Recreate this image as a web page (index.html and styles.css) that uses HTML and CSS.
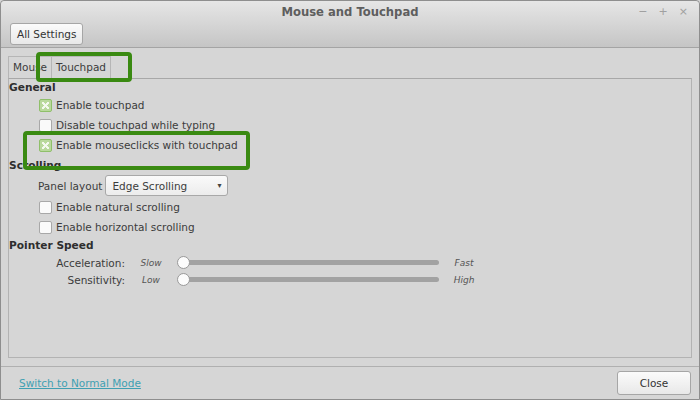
FILE: index.html
```html
<!DOCTYPE html>
<html lang="en">
<head>
    <meta charset="UTF-8">
    <title>Mouse and Touchpad</title>
    <link rel="stylesheet" href="styles.css">
</head>
<body>
    <div class="window">
        <div class="header">
            <div class="titlebar">
                <span class="title">Mouse and Touchpad</span>
                <div class="controls">
                    <span>&minus;</span>
                    <span>+</span>
                    <span>&times;</span>
                </div>
            </div>
            <div class="toolbar">
                <button class="btn">All Settings</button>
            </div>
        </div>

        <div class="main">
            <div class="tabs">
                <div class="tab">Mouse</div>
                <div class="tab active">Touchpad</div>
            </div>
            <div class="page">
                <div class="section">General</div>
                <label class="row"><span class="check on"></span>Enable touchpad</label>
                <label class="row"><span class="check"></span>Disable touchpad while typing</label>
                <label class="row"><span class="check on"></span>Enable mouseclicks with touchpad</label>

                <div class="section tall">Scrolling</div>
                <div class="row combo-row">
                    <span>Panel layout</span>
                    <div class="combo">Edge Scrolling<span class="arrow">&#9662;</span></div>
                </div>
                <label class="row"><span class="check"></span>Enable natural scrolling</label>
                <label class="row"><span class="check"></span>Enable horizontal scrolling</label>

                <div class="section mid">Pointer Speed</div>
                <div class="speed">
                    <span class="lbl">Acceleration:</span>
                    <span class="hint">Slow</span>
                    <div class="slider"><span class="knob"></span></div>
                    <span class="hint">Fast</span>

                    <span class="lbl">Sensitivity:</span>
                    <span class="hint">Low</span>
                    <div class="slider"><span class="knob"></span></div>
                    <span class="hint">High</span>
                </div>
            </div>
        </div>

        <div class="footer">
            <a href="#" class="link">Switch to Normal Mode</a>
            <button class="btn close">Close</button>
        </div>

        <div class="mark mark-tab"></div>
        <div class="mark mark-clicks"></div>
    </div>
</body>
</html>
```

FILE: styles.css
```css
* {
    box-sizing: border-box;
    margin: 0;
    padding: 0;
}

body {
    font-family: "DejaVu Sans", sans-serif;
    font-size: 10.5px;
    color: #3c3c3c;
    background-color: #d6d6d6;
}

.window {
    position: relative;
    width: 700px;
    height: 400px;
    border: 1px solid #8e8e8e;
    border-radius: 4px 4px 0 0;
    background-color: #d6d6d6;
    display: flex;
    flex-direction: column;
}

.header {
    height: 47px;
    background: linear-gradient(#e6e6e6, #c5c5c5);
    border-bottom: 1px solid #a4a4a4;
    border-radius: 4px 4px 0 0;
}

.titlebar {
    height: 22px;
    display: flex;
    align-items: center;
    justify-content: center;
    position: relative;
}

.title {
    font-size: 11.6px;
    font-weight: bold;
    color: #5e5e5e;
}

.controls {
    position: absolute;
    right: 11px;
    top: 4px;
    display: flex;
    gap: 11px;
    color: #a0a0a0;
    font-size: 11px;
}

.toolbar {
    padding: 0 0 0 9px;
}

.btn {
    font-family: "DejaVu Sans", sans-serif;
    font-size: 10.5px;
    color: #333;
    height: 22px;
    padding: 0 6px;
    background: linear-gradient(#fbfbfb, #e8e8e8);
    border: 1px solid #a6a6a6;
    border-radius: 3px;
}

.main {
    padding: 8px 7px 8px 7px;
    height: 318px;
    display: flex;
    flex-direction: column;
}

.tabs {
    display: flex;
    height: 22px;
}

.tab {
    padding: 0 4px;
    line-height: 21px;
    border: 1px solid #b6b6b6;
    border-bottom: none;
}

.tab + .tab {
    border-left: none;
}

.page {
    flex: 1;
    border: 1px solid #b3b3b3;
    border-top-color: #a8a8a8;
}

.section {
    font-weight: bold;
    font-size: 10.6px;
    color: #2e2e2e;
    height: 16px;
    line-height: 16px;
}

.section.tall {
    height: 20px;
    line-height: 20px;
}

.section.mid {
    height: 17px;
    line-height: 17px;
}

.row {
    display: flex;
    align-items: center;
    height: 20px;
    padding-left: 30px;
}

.check {
    width: 13px;
    height: 13px;
    margin-right: 4px;
    border: 1px solid #a8a8a8;
    border-radius: 2px;
    background-color: #fafafa;
    position: relative;
}

.check.on {
    background-color: #b9d99c;
    border-color: #8fbf6a;
}

.check.on::after {
    content: "";
    position: absolute;
    left: 2px;
    top: 2px;
    width: 7px;
    height: 7px;
    background:
        linear-gradient(45deg, transparent 42%, #f4f9ee 42%, #f4f9ee 58%, transparent 58%),
        linear-gradient(-45deg, transparent 42%, #f4f9ee 42%, #f4f9ee 58%, transparent 58%);
}

.combo-row {
    height: 22px;
    padding-left: 29px;
    padding-bottom: 1px;
    gap: 3px;
}

.combo {
    width: 123px;
    height: 21px;
    padding: 0 6px;
    display: flex;
    align-items: center;
    justify-content: space-between;
    background: linear-gradient(#fafafa, #ececec);
    border: 1px solid #a8a8a8;
    border-radius: 3px;
}

.arrow {
    font-size: 8px;
    color: #444;
}

.speed {
    display: grid;
    grid-template-columns: 116px 52px 264px 46px;
    grid-auto-rows: 17px;
    align-items: center;
}

.lbl {
    text-align: right;
}

.hint {
    text-align: center;
    font-style: italic;
    font-size: 9px;
    color: #555;
}

.slider {
    position: relative;
    height: 5px;
    margin: 0 2px 0 1px;
    background-color: #a2a2a2;
    border-radius: 3px;
}

.knob {
    position: absolute;
    left: -1px;
    top: -4px;
    width: 13px;
    height: 13px;
    background-color: #fcfcfc;
    border: 1px solid #999;
    border-radius: 50%;
}

.footer {
    flex: 1;
    border-top: 1px solid #b0b0b0;
    display: flex;
    align-items: center;
    justify-content: space-between;
    padding: 0 8px 0 18px;
}

.link {
    color: #3fa0b2;
    text-decoration: underline;
}

.close {
    width: 74px;
    height: 24px;
}

.mark {
    position: absolute;
    border: 4px solid #3a8a12;
    border-radius: 4px;
}

.mark-tab {
    left: 35px;
    top: 51px;
    width: 96px;
    height: 30px;
}

.mark-clicks {
    left: 22px;
    top: 130px;
    width: 227px;
    height: 39px;
}
```
